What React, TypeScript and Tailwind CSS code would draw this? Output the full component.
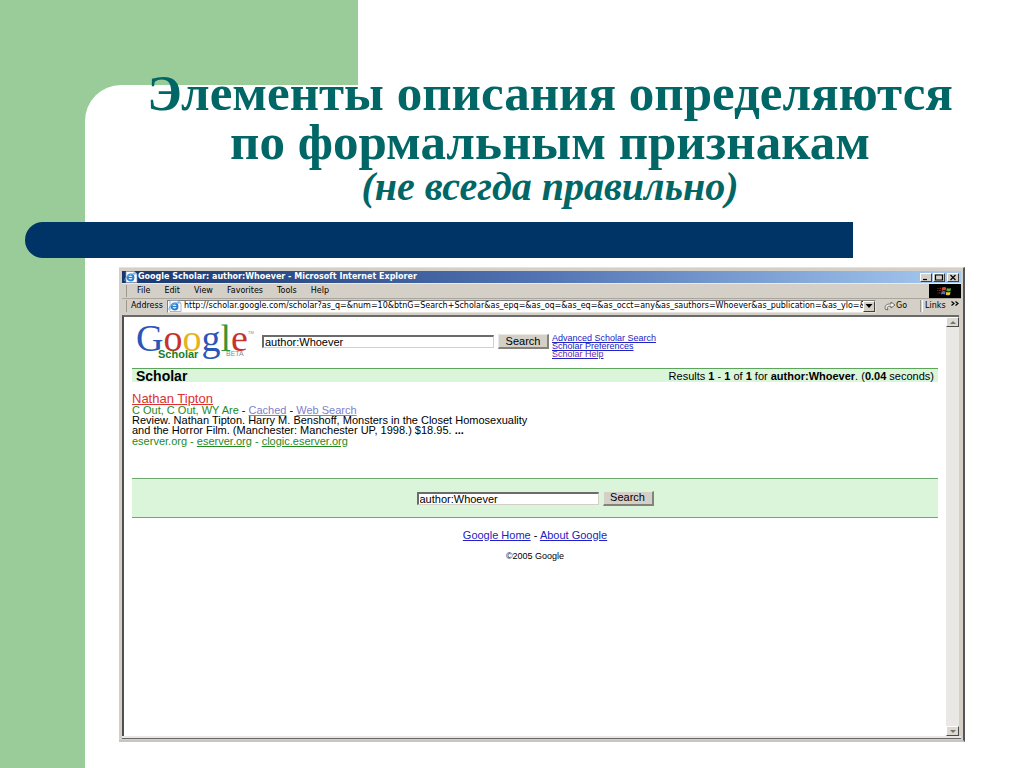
import { useState } from 'react';
import type { ReactNode } from 'react';

const ADDRESS =
  'http://scholar.google.com/scholar?as_q=&num=10&btnG=Search+Scholar&as_epq=&as_oq=&as_eq=&as_occt=any&as_sauthors=Whoever&as_publication=&as_ylo=&';

const MENU = ['File', 'Edit', 'View', 'Favorites', 'Tools', 'Help'];

function PageIcon() {
  return (
    <svg viewBox="0 0 14 12" className="w-3.5 h-3 shrink-0" aria-hidden="true">
      <path d="M2 0.5h8l3 2.5v8.5H2z" fill="#fff" stroke="#8394b4" strokeWidth="0.7" />
      <path d="M10 0.5v2.5h3" fill="#c9d4e8" stroke="#8394b4" strokeWidth="0.6" />
      <circle cx="6.5" cy="6.5" r="3" fill="none" stroke="#2b7fd0" strokeWidth="1.9" />
      <path d="M4 6.5h6" stroke="#2b7fd0" strokeWidth="1.3" />
      <path d="M0.8 9.8C1 6 6 2.2 10.8 3" fill="none" stroke="#5fb2ee" strokeWidth="1" />
    </svg>
  );
}

function WindowsFlag() {
  return (
    <svg viewBox="0 0 16 10" className="w-4 h-2.5" aria-hidden="true">
      <path d="M5 1.6c1.5-.8 3-.7 4.2 0l-.5 3c-1.2-.6-2.6-.6-4.1.1z" fill="#d8482c" />
      <path d="M9.9 1.9c1.3.7 2.8.7 4.2 0l-.5 3c-1.4.7-2.9.6-4.2 0z" fill="#5fae3c" />
      <path d="M4.5 5.4c1.5-.7 2.9-.7 4.1 0l-.5 3c-1.2-.7-2.7-.7-4.1 0z" fill="#3f74cf" />
      <path d="M9.3 5.7c1.3.7 2.7.7 4.2 0l-.5 3c-1.4.7-2.9.7-4.2 0z" fill="#e8c433" />
      <path d="M0.5 2.5h1M2.5 2.3H4M0.3 4.5h1M2.2 4.5h1.5M0.5 7h1M2 7h1.5" stroke="#b0432c" strokeWidth="0.8" />
    </svg>
  );
}

function GoIcon() {
  return (
    <svg viewBox="0 0 12 10" className="w-3 h-2.5" aria-hidden="true">
      <path
        d="M1.5 8.5C0.3 5.5 2 3 5.5 3H7V1l4 3-4 3V5.2H5.5C3.5 5.2 2.5 6.5 4 8.8z"
        fill="#f4f3ef"
        stroke="#55534e"
        strokeWidth="0.8"
      />
    </svg>
  );
}

function CaptionButton({ label, children }: { label: string; children: ReactNode }) {
  return (
    <button
      aria-label={label}
      className="w-3 h-[9px] flex items-center justify-center bg-[#d4d0c8] border border-t-white border-l-white border-r-[#404040] border-b-[#404040]"
    >
      <svg viewBox="0 0 10 7" className="w-2.5 h-[7px]" fill="none" stroke="#000" strokeWidth="1.2" aria-hidden="true">
        {children}
      </svg>
    </button>
  );
}

function SearchForm({ id, className }: { id: string; className: string }) {
  const [query, setQuery] = useState('author:Whoever');
  return (
    <form className="flex items-center gap-1" onSubmit={(e) => e.preventDefault()}>
      <input
        id={id}
        aria-label="Search Scholar"
        value={query}
        onChange={(e) => setQuery(e.target.value)}
        className={`h-[13px] px-px bg-white border-t-2 border-l-2 border-r border-b border-t-[#6b6b6b] border-l-[#6b6b6b] border-r-[#d4d0c8] border-b-[#d4d0c8] text-[11px] leading-[10px] outline-none ${className}`}
      />
      <button className="w-[51px] h-[15px] bg-[#d4d0c8] border-r-2 border-b-2 border-t border-l border-t-[#ece9e4] border-l-[#ece9e4] border-r-[#85827c] border-b-[#85827c] text-[11px] leading-[11px]">
        Search
      </button>
    </form>
  );
}

function GoogleLogo() {
  return (
    <div className="relative w-[126px] h-8 font-['Liberation_Serif',serif]">
      <div className="text-[38px] leading-[22px] whitespace-nowrap">
        <span className="text-[#2a56b8]">G</span>
        <span className="text-[#c8322b]">o</span>
        <span className="text-[#e3b422]">o</span>
        <span className="text-[#2a56b8]">g</span>
        <span className="text-[#35963c]">l</span>
        <span className="text-[#c8322b]">e</span>
      </div>
      <span className="absolute left-[22px] top-[22px] font-['Liberation_Sans',sans-serif] text-[11px] leading-[10px] font-bold text-[#1c7d28]">
        Scholar
      </span>
      <span className="absolute left-[90px] top-[23px] font-['Liberation_Sans',sans-serif] text-[7px] leading-2 text-[#8b8b8b]">
        BETA
      </span>
      <span className="absolute left-28 top-1 font-['Liberation_Sans',sans-serif] text-[4px] leading-1 text-[#8b8b8b]">
        TM
      </span>
    </div>
  );
}

function BrowserChrome() {
  return (
    <header className="font-['DejaVu_Sans',sans-serif] text-[8px] leading-3 text-black">
      <div className="h-3 flex items-center justify-between px-0.5 bg-linear-to-r from-[#17376f] via-[#5374b4] to-[#a6caf0]">
        <div className="flex items-center text-white font-bold whitespace-nowrap">
          <PageIcon />
          <span>Google Scholar: author:Whoever - Microsoft Internet Explorer</span>
        </div>
        <div className="flex gap-0.5">
          <div className="flex gap-px">
            <CaptionButton label="Minimize">
              <path d="M2 5.5h4" />
            </CaptionButton>
            <CaptionButton label="Maximize">
              <path d="M1.5 1h7v5h-7z" />
            </CaptionButton>
          </div>
          <CaptionButton label="Close">
            <path d="M2.5 1l5 5M7.5 1l-5 5" />
          </CaptionButton>
        </div>
      </div>

      <div className="h-[15px] flex items-stretch justify-between border-t border-[#ecebe6]">
        <nav className="flex items-center gap-3.5 pl-1">
          <span className="w-px h-3 bg-[#9a978f] -mr-1" />
          {MENU.map((item) => (
            <button key={item}>{item}</button>
          ))}
        </nav>
        <div className="w-8 bg-black flex items-center justify-center">
          <WindowsFlag />
        </div>
      </div>

      <div className="h-[15px] flex items-center border-t border-[#aaa69e]">
        <span className="w-px h-3 mx-1 bg-[#9a978f]" />
        <label htmlFor="address" className="w-9 shrink-0">
          Address
        </label>
        <div className="flex-1 min-w-0 h-[13px] flex items-center bg-white border border-t-[#808080] border-l-[#808080] border-r-[#e6e3dd] border-b-[#e6e3dd]">
          <PageIcon />
          <input
            id="address"
            defaultValue={ADDRESS}
            className="flex-1 min-w-0 h-[11px] pl-0.5 outline-none"
          />
          <button
            aria-label="Show addresses"
            className="w-3 h-[11px] flex items-center justify-center bg-[#d4d0c8] border border-t-white border-l-white border-r-[#404040] border-b-[#404040]"
          >
            <svg viewBox="0 0 8 4" className="w-2 h-1" aria-hidden="true">
              <path d="M0.5 0h7L4 4z" fill="#000" />
            </svg>
          </button>
        </div>
        <button className="ml-2 w-9 flex items-center">
          <GoIcon />
          Go
        </button>
        <span className="w-[3px] h-3 border-x border-l-[#9a978f] border-r-white" />
        <span className="w-[26px] pl-0.5">Links</span>
        <button aria-label="More links" className="w-3 h-3 pt-px flex items-start justify-center">
          <svg viewBox="0 0 8 5" className="w-2 h-[5px]" fill="none" stroke="#000" strokeWidth="1.2" aria-hidden="true">
            <path d="M0.5 0.5l2.5 2-2.5 2M4.5 0.5l2.5 2-2.5 2" />
          </svg>
        </button>
      </div>
    </header>
  );
}

function ScrollButton({ label, d }: { label: string; d: string }) {
  return (
    <button
      aria-label={label}
      className="w-full h-2.5 flex items-center justify-center bg-[#dcd9d2] border border-t-white border-l-white border-r-[#4a4a4a] border-b-[#4a4a4a]"
    >
      <svg viewBox="0 0 6 3" className="w-1.5 h-[3px]" aria-hidden="true">
        <path d={d} fill="#77746c" />
      </svg>
    </button>
  );
}

function ScholarPage() {
  return (
    <div className="flex-1 min-w-0 bg-white px-2 pt-2.5 font-['Liberation_Sans',sans-serif] text-[11px] leading-[10px] text-black">
      <div className="flex items-start pl-1">
        <GoogleLogo />
        <div className="mt-[7px] flex items-start">
          <SearchForm id="query-top" className="w-[232px]" />
          <ul className="ml-[3px] text-[9px] leading-2 underline text-[#2222c4] whitespace-nowrap">
            <li>
              <a href="#advanced">Advanced Scholar Search</a>
            </li>
            <li>
              <a href="#preferences">Scholar Preferences</a>
            </li>
            <li className="text-[#6a2aa8]">
              <a href="#help">Scholar Help</a>
            </li>
          </ul>
        </div>
      </div>

      <div className="mt-[9px] h-3.5 flex items-center justify-between px-1 bg-[#daf5da] border-t border-[#5da55d]">
        <h2 className="text-sm leading-3 font-bold">Scholar</h2>
        <p>
          Results <b>1</b> - <b>1</b> of <b>1</b> for <b>author:Whoever</b>. (<b>0.04</b> seconds)
        </p>
      </div>

      <article className="mt-[11px]">
        <h3 className="text-[13px] leading-3 text-[#dc2f2f]">
          <a href="#result" className="underline">
            Nathan Tipton
          </a>
        </h3>
        <p className="text-[#258a25]">
          C Out, C Out, WY Are <span className="text-black">-</span>{' '}
          <a href="#cached" className="underline text-[#8080cc]">
            Cached
          </a>{' '}
          <span className="text-black">-</span>{' '}
          <a href="#web" className="underline text-[#8080cc]">
            Web Search
          </a>
        </p>
        <p>
          Review. Nathan Tipton. Harry M. Benshoff, Monsters in the Closet Homosexuality
          <br />
          and the Horror Film. (Manchester: Manchester UP, 1998.) $18.95. <b>...</b>
        </p>
        <p className="mt-px text-[#258a25]">
          eserver.org -{' '}
          <a href="#eserver" className="underline">
            eserver.org
          </a>{' '}
          -{' '}
          <a href="#clogic" className="underline">
            clogic.eserver.org
          </a>
        </p>
      </article>

      <div className="mt-8 h-10 flex items-center justify-center bg-[#daf5da] border-y border-[#6fa96f]">
        <SearchForm id="query-bottom" className="w-[182px]" />
      </div>

      <footer className="mt-3 text-center">
        <p>
          <a href="#home" className="underline text-[#2222c4]">
            Google Home
          </a>{' '}
          -{' '}
          <a href="#about" className="underline text-[#2222c4]">
            About Google
          </a>
        </p>
        <p className="mt-3 text-[9px] leading-2">©2005 Google</p>
      </footer>
    </div>
  );
}

function BrowserWindow() {
  return (
    <section className="flex-1 flex flex-col ml-[119px] mr-[59px] mt-[9px] mb-[26px] bg-[#d4d0c8] pt-[3px] pl-[3px] pr-0.5 border-t border-r-2 border-b-2 border-t-[#e5e2dc] border-r-[#55555a] border-b-[#c8c5be]">
      <BrowserChrome />
      <div className="flex-1 flex mt-0.5 mr-0.5 border-t-2 border-l-2 border-t-[#6a6a6a] border-l-[#505050]">
        <ScholarPage />
        <div className="w-[13px] flex flex-col justify-between bg-[#e9e8e4]">
          <ScrollButton label="Scroll up" d="M0 3h6L3 0z" />
          <ScrollButton label="Scroll down" d="M0 0h6L3 3z" />
        </div>
      </div>
      <div className="h-0.5 bg-[#eae8e4]" />
      <div className="h-px bg-[#66666a]" />
      <div className="h-px" />
    </section>
  );
}

function Backdrop() {
  return (
    <div className="col-start-1 row-start-1 grid grid-cols-[85px_273px_1fr] grid-rows-[85px_1fr]">
      <div className="col-span-2 bg-[#99cc99]" />
      <div />
      <div className="bg-[#99cc99]" />
      <div className="bg-[#99cc99]">
        <div className="h-full bg-white rounded-tl-[36px]" />
      </div>
    </div>
  );
}

export default function App() {
  return (
    <div className="min-h-screen grid bg-white">
      <Backdrop />
      <main className="col-start-1 row-start-1 z-10 flex flex-col">
        <h1 className="h-[222px] pt-[69px] pl-[76px] text-center font-['Liberation_Serif',serif] font-bold text-[51px] leading-[49px] text-[#006666]">
          Элементы описания определяются
          <br />
          по формальным признакам
          <span className="block italic text-[40px] leading-10">(не всегда правильно)</span>
        </h1>
        <div className="h-9 ml-[25px] mr-[171px] rounded-l-full bg-[#003366]" />
        <BrowserWindow />
      </main>
    </div>
  );
}
